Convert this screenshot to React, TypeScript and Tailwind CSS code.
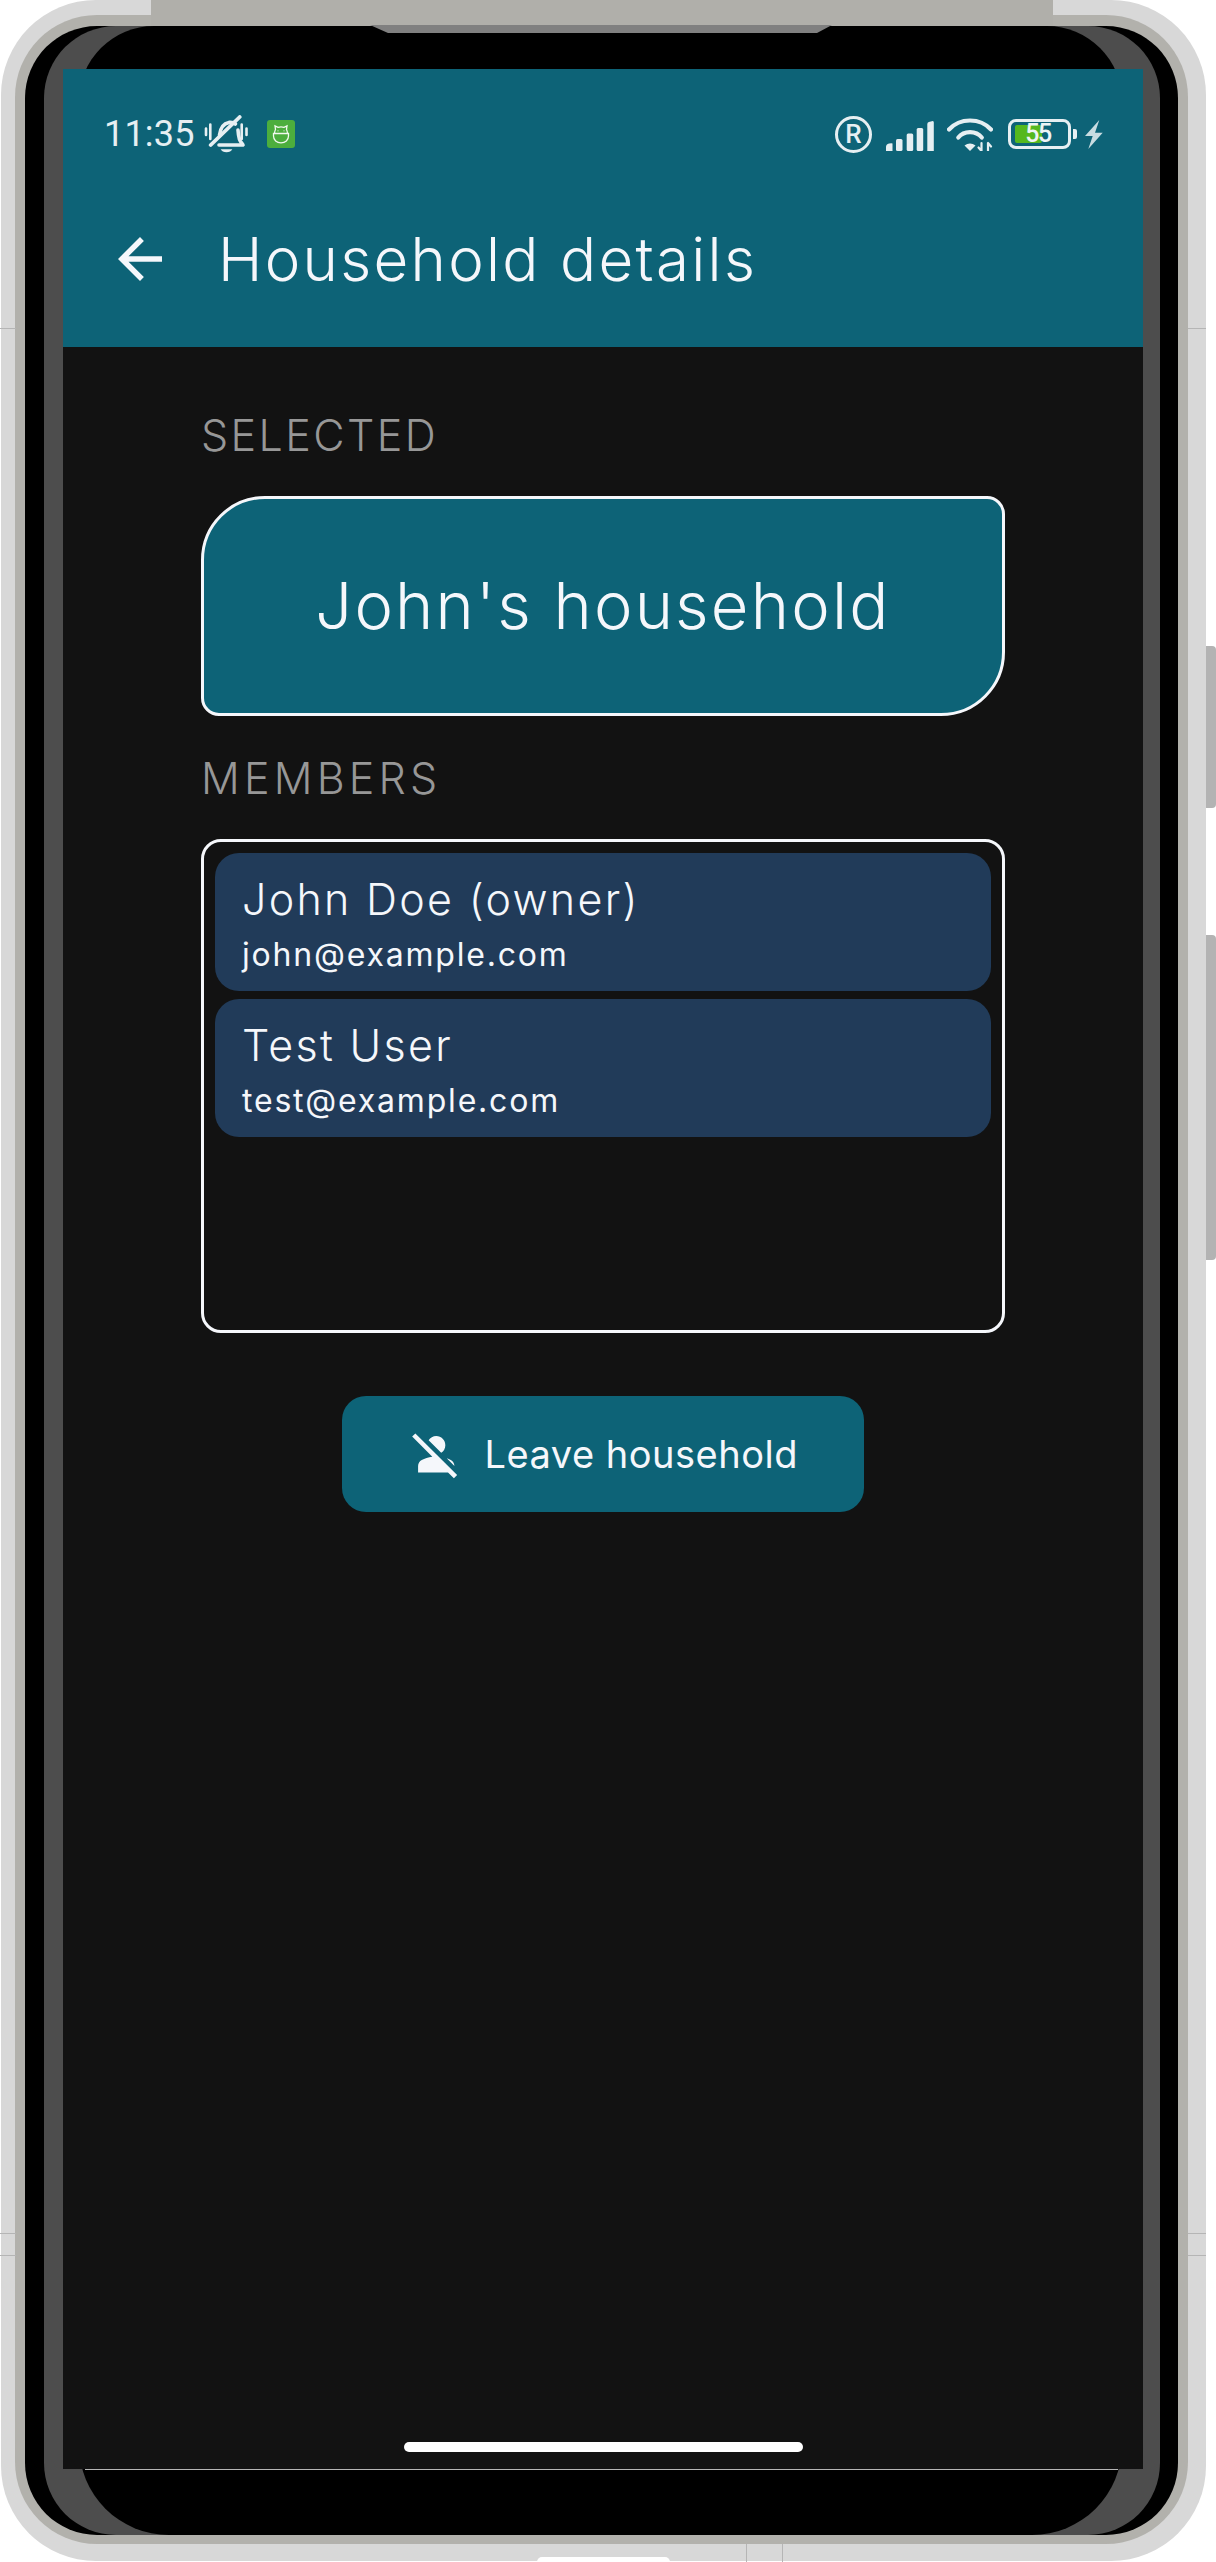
const ink = "#e6eff2";

function Bell() {
  return (
    <svg width="44" height="38" viewBox="0 0 44 38" fill="none" stroke={ink} strokeLinecap="round" strokeLinejoin="round">
      <path d="M2 13.500V20M6.300 9.500V24M37.700 9.500V24M42.500 13.500V20" strokeWidth="2.600" />
      <path d="M6.700 30 35.700 2" strokeWidth="3.800" />
      <path d="M15.500 20c.8-7 4-11.500 9.500-12.600 3-.3 5 .4 6.500 1.600M34 15c.2 3.500.6 6.500 1.500 9.500.7 2 2.200 3.400 3.500 5.500H15" strokeWidth="3.600" />
      <path d="M16.700 34.200h11.600c-1 2-3 3-5.800 3s-4.800-1-5.800-3z" fill={ink} stroke="none" />
    </svg>
  );
}

function AppBadge() {
  return (
    <div className="w-[28px] h-[28px] rounded-[3px] bg-[#4cae3d] flex items-center justify-center">
      <svg width="18" height="20" viewBox="0 0 18 20" fill="none" stroke="#f1f8ee" strokeWidth="1.300">
        <path d="M2.500 9.500C2.500 8 3 6.500 3.500 5.500L3 1.800 6 3.300c2-.5 4-.5 6 0l3-1.500-.5 3.700c.5 1 1 2.500 1 4" />
        <path d="M1.500 9.500h15V12c0 4-3.200 6.800-7.500 6.800S1.500 16 1.500 12z" />
        <path d="M6 6.500v.8M12 6.500v.8" />
      </svg>
    </div>
  );
}

function Signal() {
  return (
    <svg width="48" height="30" viewBox="0 0 48 30" fill={ink}>
      <path d="M0 30v-4q0-3 3-3.500 3-.5 3.500 0V30z" />
      <rect x="10" y="18" width="6.500" height="12" rx="1.500" />
      <rect x="20.700" y="12.500" width="6.500" height="17.500" rx="1.500" />
      <rect x="30.700" y="7" width="6.500" height="23" rx="1.500" />
      <path d="M41.300 30V3q0-1.500 1.500-2l4-1q1 0 1 1.500V30z" />
    </svg>
  );
}

function Wifi() {
  return (
    <svg width="46" height="33" viewBox="0 0 46 33" fill="none" stroke={ink} strokeLinecap="round">
      <path d="M2 11.500C13 -.5 33 -.5 44 11.500" strokeWidth="4.200" />
      <path d="M11.300 19.500C17 12.300 29 12.300 34.800 19.500" strokeWidth="4.200" />
      <path d="M17.500 27.500c3.500-2.800 7.500-2.800 11 0L23 33z" fill={ink} stroke="none" />
      <path d="M34.500 25v8M31.500 29.500l3 3.500M41 25v8M41 25l3 3.500" strokeWidth="2.200" />
    </svg>
  );
}

function Battery() {
  return (
    <div className="flex items-center gap-[2px]">
      <div className="relative w-[63px] h-[30px] rounded-[8px] border-[3px] border-[#e6eff2]">
        <div className="absolute left-[4px] top-[3px] w-[27px] h-[18px] rounded-[2px] bg-[#55b81e]"></div>
        <span className="absolute left-[12px] top-0 w-[30px] text-center text-[25px] leading-[24px] tracking-[-1.500px] font-medium font-['Roboto',sans-serif] text-[#eef4f5]">55</span>
      </div>
      <div className="w-[4px] h-[10px] rounded-r-[2px] bg-[#e6eff2]"></div>
    </div>
  );
}

function Bolt() {
  return (
    <svg width="19" height="29" viewBox="0 0 19 29" fill="#c8dce1">
      <path d="M15.300 0 1 16h7.700L4.300 29l14.400-16.300H11z" />
    </svg>
  );
}

function Member({ name, email }: { name: string; email: string }) {
  return (
    <div className="h-[138px] rounded-[24px] bg-[#213b59] pl-[27px] flex flex-col">
      <div className="mt-[21px] h-[50px] leading-[50px] text-[43px] font-light tracking-[2.300px] text-[#f5f7fb] font-['Inter',sans-serif]">{name}</div>
      <div className="mt-[11px] h-[40px] leading-[40px] text-[32px] tracking-[1.800px] text-[#f5f7fb] font-['Inter',sans-serif]">{email}</div>
    </div>
  );
}

export default function App() {
  return (
    <div className="relative w-[1216px] h-[2562px] bg-white overflow-hidden">
      {/* side buttons */}
      <div className="absolute left-[1206px] top-[646px] w-[10px] h-[162px] rounded-r-[4px] bg-[#b3b3b3]"></div>
      <div className="absolute left-[1206px] top-[935px] w-[10px] h-[325px] rounded-r-[4px] bg-[#b3b3b3]"></div>

      {/* device body */}
      <div className="relative ml-[1px] w-[1205px] h-[2561px] rounded-[95px] bg-[#d8d8d8] pl-[14px] pr-[18px] pt-[15px] pb-[17px]">
        <div className="h-full rounded-[82px] bg-[#b2b1ac] pl-[10px] pr-[10px] pt-[11px] pb-[9px]">
          <div className="h-full rounded-[72px] bg-black pl-[19px] pr-[18px]">
            <div className="relative h-full rounded-[72px] bg-[#4d4d4d] pl-[19px] pr-[17px] pt-[43px]">
              {/* inner bezel */}
              <div className="absolute left-[35px] right-[38px] top-0 bottom-0 bg-black rounded-t-[75px] rounded-b-[90px]"></div>

              {/* screen */}
              <div className="relative h-[2400px] bg-[#121212] flex flex-col">
                <header className="h-[278px] bg-[#0d6377] flex flex-col">
                  <div className="mt-[46px] h-[38px] flex items-center justify-between pl-[41px] pr-[40px]">
                    <div className="flex items-center">
                      <span className="text-[36px] leading-[38px] tracking-[0.200px] font-[450] font-['Roboto',sans-serif] text-[#e6eff2]">11:35</span>
                      <div className="ml-[9px]"><Bell /></div>
                      <div className="ml-[19px]"><AppBadge /></div>
                    </div>
                    <div className="flex items-center">
                      <div className="w-[37px] h-[37px] rounded-full border-[3.500px] border-[#e6eff2] flex items-center justify-center text-[26px] leading-none font-medium font-['Roboto',sans-serif] text-[#e6eff2]">R</div>
                      <div className="ml-[14px] mt-[3px]"><Signal /></div>
                      <div className="ml-[13px]"><Wifi /></div>
                      <div className="ml-[15px]"><Battery /></div>
                      <div className="ml-[7px]"><Bolt /></div>
                    </div>
                  </div>
                  <div className="mt-[73px] h-[66px] flex items-center pl-[44px]">
                    <svg width="66" height="66" viewBox="0 0 24 24" fill="#f5f7fb">
                      <path d="M20 11H7.830l5.590-5.590L12 4l-8 8 8 8 1.410-1.410L7.830 13H20v-2z" />
                    </svg>
                    <h1 className="ml-[45px] text-[60px] font-light leading-[66px] tracking-[2.300px] text-[#f5f7fb] font-['Inter',sans-serif]">Household details</h1>
                  </div>
                </header>

                <main className="flex flex-col px-[138px]">
                  <div className="mt-[65px] h-[46px] leading-[46px] text-[43px] font-light tracking-[2.400px] text-[#979797] font-['Inter',sans-serif]">SELECTED</div>
                  <div className="mt-[38px] h-[220px] border-[3px] border-[#f5f7fb] rounded-tl-[64px] rounded-tr-[18px] rounded-br-[64px] rounded-bl-[18px] bg-[#0d6377] flex items-center justify-center">
                    <span className="text-[65px] font-light tracking-[2.200px] text-[#f5f7fb] font-['Inter',sans-serif]">John's household</span>
                  </div>
                  <div className="mt-[39px] h-[46px] leading-[46px] text-[43px] font-light tracking-[4.200px] text-[#979797] font-['Inter',sans-serif]">MEMBERS</div>
                  <div className="mt-[38px] h-[494px] border-[3px] border-[#f5f7fb] rounded-[20px] p-[11px] flex flex-col gap-[8px]">
                    <Member name="John Doe (owner)" email="john@example.com" />
                    <Member name="Test User" email="test@example.com" />
                  </div>
                  <div className="mt-[63px] self-center w-[522px] h-[116px] rounded-[24px] bg-[#0d6377] flex items-center pl-[67px]">
                    <svg width="54.500" height="54.500" viewBox="0 0 24 24" fill="#f5f7fb">
                      <path d="M8.650 5.820C9.360 4.720 10.600 4 12 4c2.210 0 4 1.790 4 4 0 1.400-.720 2.640-1.820 3.350L8.650 5.820zM20 17.170c-.020-1.100-.630-2.110-1.610-2.620-.540-.280-1.130-.540-1.770-.760L20 17.170zm1.190 4.020L2.810 2.810 1.390 4.220l8.890 8.890c-1.810.230-3.390.790-4.670 1.450C4.610 15.070 4 16.100 4 17.220V20h13.170l2.610 2.610 1.410-1.420z" />
                    </svg>
                    <span className="ml-[21px] text-[38px] tracking-[0.500px] text-[#f5f7fb] font-['Inter',sans-serif]">Leave household</span>
                  </div>
                </main>

                {/* home indicator */}
                <div className="mt-auto mb-[17px] self-center w-[399px] h-[10px] rounded-full bg-white"></div>
              </div>
              <div className="relative ml-[22px] mr-[25px] h-px bg-[#b5b5b5]"></div>
            </div>
          </div>
        </div>
      </div>

      {/* top bar and notch */}
      <div className="absolute left-[151px] top-0 w-[902px] h-[26px] bg-[#b0afaa]"></div>
      <div className="absolute left-[370px] top-[25px] w-[462px] h-[8px] bg-[#808080] [clip-path:polygon(0_0,100%_0,calc(100%-15px)_100%,18px_100%)]"></div>

      {/* body seams */}
      <div className="absolute left-0 top-[328px] w-[16px] h-px bg-[#b5b5b5]"></div>
      <div className="absolute left-[1188px] top-[328px] w-[18px] h-px bg-[#b5b5b5]"></div>
      <div className="absolute left-0 top-[2233px] w-[16px] h-px bg-[#b5b5b5]"></div>
      <div className="absolute left-0 top-[2255px] w-[16px] h-px bg-[#b5b5b5]"></div>
      <div className="absolute left-[1188px] top-[2233px] w-[18px] h-px bg-[#b5b5b5]"></div>
      <div className="absolute left-[1188px] top-[2255px] w-[18px] h-px bg-[#b5b5b5]"></div>
      <div className="absolute left-[746px] top-[2544px] w-px h-[18px] bg-[#b5b5b5]"></div>
      <div className="absolute left-[782px] top-[2544px] w-px h-[18px] bg-[#b5b5b5]"></div>
      <div className="absolute left-[537px] top-[2557px] w-[133px] h-[5px] rounded-t-[24px] bg-white"></div>
    </div>
  );
}
